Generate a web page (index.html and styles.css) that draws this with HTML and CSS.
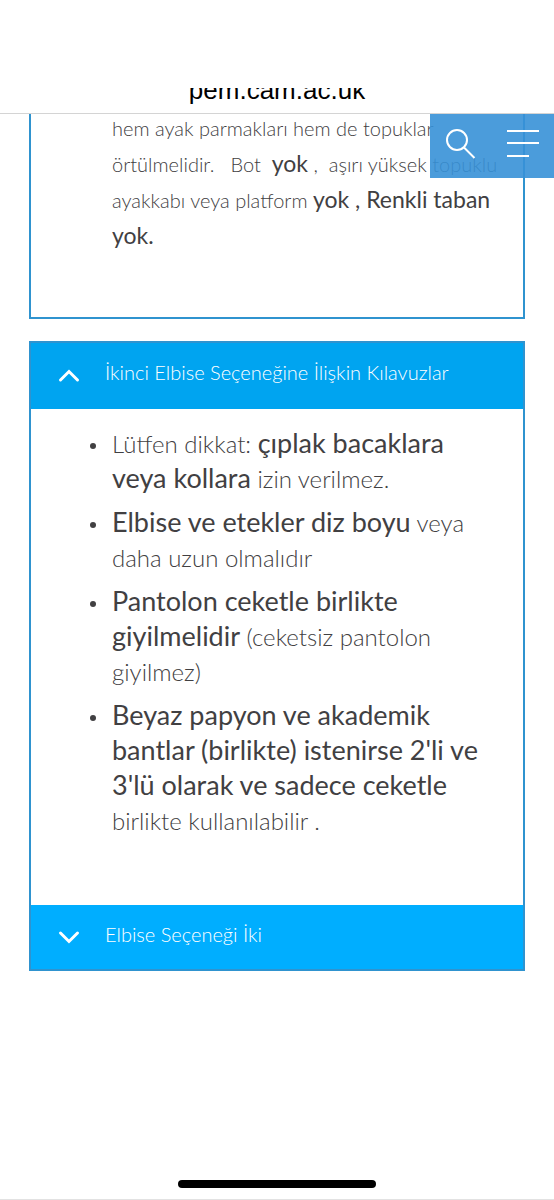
FILE: index.html
```html
<!DOCTYPE html>
<html lang="tr">
<head>
<meta charset="utf-8">
<meta name="viewport" content="width=device-width, initial-scale=1">
<title>pem.cam.ac.uk</title>
<link rel="stylesheet" href="styles.css">
</head>
<body>
<header class="browser-bar">
  <div class="address-clip"><span class="address">pem.cam.ac.uk</span></div>
</header>
<div class="site">
  <nav class="site-tools" aria-label="Site">
    <button class="tool" type="button" aria-label="Ara">
      <svg width="32" height="32" viewBox="0 0 32 32" fill="none" stroke="#fff" stroke-width="2"><circle cx="11" cy="11" r="10"/><path d="M18 18.500L28.500 29"/></svg>
    </button>
    <button class="tool" type="button" aria-label="Menü">
      <svg width="34" height="32" viewBox="0 0 34 32" fill="none" stroke="#fff" stroke-width="2"><path d="M1 2h32M1 14h32M1 27h22"/></svg>
    </button>
  </nav>
  <main class="content">
    <section class="panel panel-first">
      <p class="note">hem ayak parmakları hem de topuklar<br>örtülmelidir. &nbsp; Bot &nbsp;<b>yok</b> , &nbsp;aşırı yüksek topuklu<br>ayakkabı veya platform <b>yok , Renkli taban<br>yok.</b></p>
    </section>
    <section class="panel">
      <button class="toggle toggle-open" type="button" aria-expanded="true" aria-controls="guides">
        <svg class="chevron" width="24" height="16" viewBox="0 0 24 16" fill="none" stroke="#fff" stroke-width="3" stroke-linecap="round"><path d="M3.500 13L12 4.500L20.500 13"/></svg>
        <span>İkinci Elbise Seçeneğine İlişkin Kılavuzlar</span>
      </button>
      <ul class="guides" id="guides">
        <li>Lütfen dikkat: <b>çıplak bacaklara<br>veya kollara</b> izin verilmez.</li>
        <li><b>Elbise ve etekler diz boyu</b> veya<br>daha uzun olmalıdır</li>
        <li><b>Pantolon ceketle birlikte<br>giyilmelidir</b> (ceketsiz pantolon<br>giyilmez)</li>
        <li><b>Beyaz papyon ve akademik<br>bantlar (birlikte) istenirse 2'li ve<br>3'lü olarak ve sadece ceketle</b><br>birlikte kullanılabilir .</li>
      </ul>
      <button class="toggle" type="button" aria-expanded="false">
        <svg class="chevron" width="24" height="16" viewBox="0 0 24 16" fill="none" stroke="#fff" stroke-width="3" stroke-linecap="round"><path d="M3.500 4L12 12.500L20.500 4"/></svg>
        <span>Elbise Seçeneği İki</span>
      </button>
    </section>
  </main>
</div>
<footer class="home"><div class="home-bar"></div></footer>
</body>
</html>
```
FILE: styles.css
```css
* { box-sizing: border-box; }

body {
  display: flex;
  flex-direction: column;
  min-height: 100vh;
  margin: 0;
  background: #fff;
  color: #414042;
  font-family: Lato, "Open Sans", sans-serif;
  font-weight: 300;
}

.browser-bar {
  padding-top: 88px;
  border-bottom: 1px solid #d4d4d4;
}

.address-clip {
  display: flex;
  align-items: flex-end;
  justify-content: center;
  height: 25px;
  padding-bottom: 7px;
  overflow: hidden;
}

.address {
  color: #000;
  font: 400 26px/32px "Liberation Sans", Arial, sans-serif;
}

.site {
  position: relative;
  flex: 1;
}

.site-tools {
  position: absolute;
  top: 0;
  right: 0;
  display: flex;
  align-items: center;
  justify-content: space-between;
  width: 124px;
  height: 64px;
  padding: 0 14px 2px 16px;
  background: rgba(55, 145, 215, 0.9);
}

.tool {
  display: flex;
  padding: 0;
  border: 0;
  background: none;
}

.content {
  display: flex;
  flex-direction: column;
  gap: 22px;
  padding: 0 29px;
}

.panel {
  border: 2px solid #2f93cf;
}

.panel-first {
  padding: 0 0 63px 81px;
  border-top: 0;
}

.note {
  margin: -4px 0 0;
  font-size: 20px;
  line-height: 36px;
  white-space: nowrap;
}

b {
  font-weight: 400;
  line-height: 1;
}

.note b { font-size: 23px; }

.guides b { font-size: 27px; }

.toggle {
  display: flex;
  align-items: center;
  gap: 24px;
  width: 100%;
  height: 64px;
  padding: 0 26px;
  border: 0;
  background: #00aeff;
  color: #fff;
  font: inherit;
  font-size: 20px;
  line-height: 24px;
  text-align: left;
}

.toggle-open {
  height: 66px;
  padding-bottom: 2px;
  background: #00a4f0;
}

.toggle span { padding-bottom: 6px; }

.chevron { flex: none; }

.guides {
  display: flex;
  flex-direction: column;
  gap: 9px;
  margin: 0;
  padding: 17px 0 67px 81px;
  font-size: 24px;
  line-height: 35px;
  list-style: none;
  white-space: nowrap;
}

.guides li { position: relative; }

.guides li::before {
  content: "";
  position: absolute;
  top: 17px;
  left: -22px;
  width: 6px;
  height: 6px;
  border-radius: 50%;
  background: #414042;
}

.home {
  display: flex;
  justify-content: center;
  padding: 0 0 11px;
  border-bottom: 1px solid #e2e2e2;
}

.home-bar {
  width: 198px;
  height: 8px;
  border-radius: 4px;
  background: #000;
}
```
